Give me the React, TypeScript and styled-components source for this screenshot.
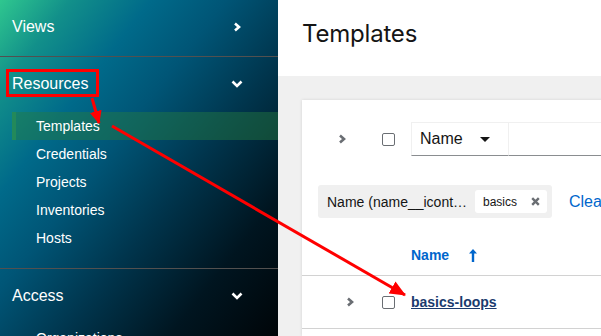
import React from 'react';
import styled, { createGlobalStyle } from 'styled-components';

const GlobalStyle = createGlobalStyle`
  html, body {
    margin: 0;
    padding: 0;
    overflow: hidden;
  }
  body {
    font-family: "Liberation Sans", Arial, sans-serif;
  }
`;

const navGroups = [
  { title: 'Views', open: false, items: [] as string[] },
  {
    title: 'Resources',
    open: true,
    items: ['Templates', 'Credentials', 'Projects', 'Inventories', 'Hosts'],
  },
  { title: 'Access', open: true, items: ['Organizations'] },
];

function ChevronRight({ color = '#fff' }: { color?: string }) {
  return (
    <svg width="8" height="10" viewBox="0 0 8 10">
      <polyline points="2,1.5 6,5 2,8.5" fill="none" stroke={color} strokeWidth="2.6" />
    </svg>
  );
}

function ChevronDown() {
  return (
    <svg width="12" height="8" viewBox="0 0 12 8">
      <polyline points="1.5,1.5 6,6 10.5,1.5" fill="none" stroke="#fff" strokeWidth="2.6" />
    </svg>
  );
}

function App() {
  return (
    <>
      <GlobalStyle />
      <Page>
        <Sidebar>
          {navGroups.map((g) => (
            <NavSection key={g.title} $open={g.open}>
              <NavHeader>
                <span>{g.title}</span>
                <IconBox>{g.open ? <ChevronDown /> : <ChevronRight />}</IconBox>
              </NavHeader>
              {g.open && (
                <NavList>
                  {g.items.map((item) => (
                    <NavItem key={item} $active={item === 'Templates'}>
                      {item}
                    </NavItem>
                  ))}
                </NavList>
              )}
            </NavSection>
          ))}
        </Sidebar>

        <Main>
          <PageHeader>
            <Title>Templates</Title>
          </PageHeader>
          <Card>
            <Toolbar>
              <ToggleIcon>
                <ChevronRight color="#6a6e73" />
              </ToggleIcon>
              <Checkbox />
              <Select>
                <span>Name</span>
                <Caret />
              </Select>
              <SearchInput />
            </Toolbar>

            <ChipRow>
              <ChipGroup>
                <ChipLabel>Name (name__icontains)</ChipLabel>
                <Chip>
                  basics
                  <svg width="9" height="9" viewBox="0 0 9 9">
                    <path d="M1.2 1.2 L7.8 7.8 M7.8 1.2 L1.2 7.8" stroke="#6a6e73" strokeWidth="2.4" />
                  </svg>
                </Chip>
              </ChipGroup>
              <ClearLink>Clear all filters</ClearLink>
            </ChipRow>

            <HeadRow>
              <SortLabel>Name</SortLabel>
              <svg width="8" height="13" viewBox="0 0 8 13">
                <path d="M4 0 L8 4.5 L5.2 4.5 L5.2 13 L2.8 13 L2.8 4.5 L0 4.5 Z" fill="#06c" />
              </svg>
            </HeadRow>

            <BodyRow>
              <RowToggle>
                <ChevronRight color="#6a6e73" />
              </RowToggle>
              <Checkbox />
              <RowLink>basics-loops</RowLink>
            </BodyRow>
          </Card>
        </Main>

        <Annotations width="601" height="336" viewBox="0 0 601 336">
          <defs>
            <marker
              id="head"
              markerUnits="userSpaceOnUse"
              markerWidth="16"
              markerHeight="14"
              refX="15"
              refY="7"
              orient="auto"
            >
              <path d="M0,0 L16,7 L0,14 Z" fill="#f00" />
            </marker>
            <marker
              id="smallHead"
              markerUnits="userSpaceOnUse"
              markerWidth="13"
              markerHeight="12"
              refX="12"
              refY="6"
              orient="auto"
            >
              <path d="M0,0 L13,6 L0,12 Z" fill="#f00" />
            </marker>
          </defs>
          <rect x="7.5" y="70.5" width="90" height="25" fill="none" stroke="#f00" strokeWidth="3" />
          <line x1="92" y1="98" x2="99" y2="123" stroke="#f00" strokeWidth="3" markerEnd="url(#smallHead)" />
          <line x1="112" y1="126" x2="405" y2="295" stroke="#f00" strokeWidth="3" markerEnd="url(#head)" />
        </Annotations>
      </Page>
    </>
  );
}

const Page = styled.div`
  position: relative;
  display: flex;
  width: 601px;
  height: 336px;
  overflow: hidden;
`;

const Sidebar = styled.nav`
  flex: 0 0 278px;
  display: flex;
  flex-direction: column;
  background: linear-gradient(
    128deg,
    #2fc78f 0%,
    #12908a 13%,
    #006a8a 28%,
    #005576 42%,
    #00354d 60%,
    #001520 80%,
    #000508 100%
  );
  color: #fff;
`;

const NavSection = styled.section<{ $open: boolean }>`
  padding: 1px 0 ${(p) => (p.$open ? '16px' : '3px')};
  border-bottom: 1px solid #52504f;
`;

const NavHeader = styled.div`
  display: flex;
  align-items: center;
  justify-content: space-between;
  height: 52px;
  padding: 0 35px 0 12px;
  font-size: 16px;
`;

const IconBox = styled.span`
  display: flex;
  justify-content: center;
  align-items: center;
  width: 12px;
`;

const NavList = styled.div`
  padding-top: 2px;
`;

const NavItem = styled.div<{ $active?: boolean }>`
  display: flex;
  align-items: center;
  height: 28px;
  margin-left: 12px;
  padding-left: 20px;
  border-left: 4px solid ${(p) => (p.$active ? '#23895a' : 'transparent')};
  background: ${(p) => (p.$active ? 'rgba(38, 125, 64, 0.45)' : 'transparent')};
  font-size: 14px;
`;

const Main = styled.main`
  flex: 1;
  display: flex;
  flex-direction: column;
  min-width: 0;
  background: #f0f0f0;
`;

const PageHeader = styled.header`
  height: 76px;
  padding: 19px 24px 0;
  box-sizing: border-box;
  background: #fff;
`;

const Title = styled.h1`
  margin: 0;
  font-family: Inter, "Noto Sans", sans-serif;
  font-size: 24px;
  font-weight: 400;
  line-height: 30px;
  letter-spacing: -0.2px;
  color: #151515;
`;

const Card = styled.div`
  flex: 1;
  margin: 24px -40px 0 24px;
  background: #fff;
  box-shadow: 0 0 3px rgba(3, 3, 3, 0.12);
`;

const Toolbar = styled.div`
  display: flex;
  align-items: center;
  margin-top: 22px;
  padding-left: 36px;
  height: 34px;
`;

const ToggleIcon = styled.span`
  display: flex;
  width: 8px;
  margin-right: 36px;
`;

const Checkbox = styled.span`
  flex: 0 0 auto;
  width: 11px;
  height: 11px;
  border: 1px solid #6a6e73;
  border-radius: 2px;
  margin-right: 16px;
  background: #fff;
`;

const Select = styled.div`
  display: flex;
  align-items: center;
  justify-content: space-between;
  width: 98px;
  height: 34px;
  box-sizing: border-box;
  padding: 0 18px 0 8px;
  border: 1px solid #f0f0f0;
  border-bottom-color: #8a8d90;
  font-size: 16px;
  color: #151515;
`;

const Caret = styled.span`
  width: 0;
  height: 0;
  border-left: 5px solid transparent;
  border-right: 5px solid transparent;
  border-top: 5px solid #151515;
`;

const SearchInput = styled.div`
  flex: 1;
  height: 34px;
  box-sizing: border-box;
  border-top: 1px solid #f0f0f0;
  border-bottom: 1px solid #8a8d90;
`;

const ChipRow = styled.div`
  display: flex;
  align-items: center;
  margin-top: 29px;
  padding-left: 16px;
`;

const ChipGroup = styled.div`
  display: flex;
  align-items: center;
  gap: 6px;
  width: 234px;
  height: 33px;
  box-sizing: border-box;
  padding: 0 5px 0 9px;
  background: #f0f0f0;
  border-radius: 3px;
`;

const ChipLabel = styled.span`
  width: 142px;
  overflow: hidden;
  white-space: nowrap;
  text-overflow: ellipsis;
  font-size: 14px;
  color: #151515;
`;

const Chip = styled.span`
  display: flex;
  align-items: center;
  justify-content: space-between;
  width: 72px;
  height: 23px;
  box-sizing: border-box;
  padding: 0 7px 0 8px;
  background: #fff;
  border-radius: 3px;
  font-size: 12px;
  color: #151515;
`;

const ClearLink = styled.span`
  margin-left: 17px;
  font-size: 16px;
  color: #06c;
  white-space: nowrap;
`;

const HeadRow = styled.div`
  display: flex;
  align-items: center;
  gap: 20px;
  height: 40px;
  margin-top: 17px;
  padding-left: 109px;
  border-bottom: 1px solid #d2d2d2;
`;

const SortLabel = styled.span`
  font-size: 14px;
  font-weight: 700;
  color: #06c;
`;

const BodyRow = styled.div`
  display: flex;
  align-items: center;
  height: 52px;
  padding-left: 44px;
  border-bottom: 1px solid #d2d2d2;
`;

const RowToggle = styled.span`
  display: flex;
  width: 8px;
  margin-right: 28px;
`;

const RowLink = styled.span`
  font-size: 14px;
  font-weight: 700;
  color: #1a3b6e;
  text-decoration: underline;
`;

const Annotations = styled.svg`
  position: absolute;
  left: 0;
  top: 0;
  pointer-events: none;
`;

export default App;
